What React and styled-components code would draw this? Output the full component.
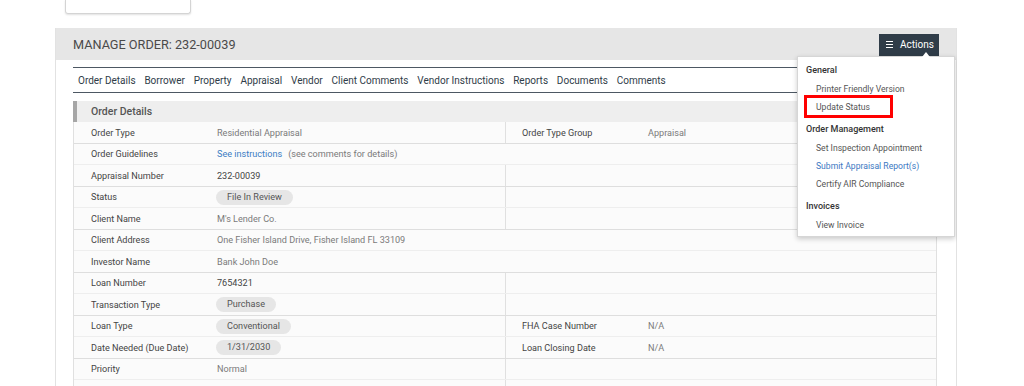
import React from "react";
import styled, { createGlobalStyle } from "styled-components";

const GlobalStyle = createGlobalStyle`
  body {
    margin: 0;
    background: #fff;
    font-family: Roboto, "Liberation Sans", Arial, sans-serif;
  }
`;

const tabs = [
  "Order Details",
  "Borrower",
  "Property",
  "Appraisal",
  "Vendor",
  "Client Comments",
  "Vendor Instructions",
  "Reports",
  "Documents",
  "Comments",
];

const rows = [
  { label: "Order Type", value: "Residential Appraisal", right: { label: "Order Type Group", value: "Appraisal" } },
  { label: "Order Guidelines", link: "See instructions", note: "(see comments for details)", full: true },
  { label: "Appraisal Number", value: "232-00039", strong: true, right: {} },
  { label: "Status", pill: "File In Review", right: {} },
  { label: "Client Name", value: "M's Lender Co.", right: {} },
  { label: "Client Address", value: "One Fisher Island Drive, Fisher Island FL 33109", full: true },
  { label: "Investor Name", value: "Bank John Doe", full: true },
  { label: "Loan Number", value: "7654321", strong: true, right: {} },
  { label: "Transaction Type", pill: "Purchase", right: {} },
  { label: "Loan Type", pill: "Conventional", right: { label: "FHA Case Number", value: "N/A" } },
  { label: "Date Needed (Due Date)", pill: "1/31/2030", right: { label: "Loan Closing Date", value: "N/A" } },
  { label: "Priority", value: "Normal", right: {} },
  { label: "", value: "", right: {} },
];

const menu = [
  { title: "General", items: [{ text: "Printer Friendly Version" }, { text: "Update Status", marked: true }] },
  {
    title: "Order Management",
    items: [
      { text: "Set Inspection Appointment" },
      { text: "Submit Appraisal Report(s)", link: true },
      { text: "Certify AIR Compliance" },
    ],
  },
  { title: "Invoices", items: [{ text: "View Invoice" }] },
];

const Page = styled.div`
  width: 902px;
  padding-left: 55px;
  height: 386px;
  overflow: hidden;
`;

const TopCard = styled.div`
  margin-left: 10px;
  width: 124px;
  height: 13px;
  border: 1px solid #d4d4d4;
  border-top: none;
  border-radius: 0 0 3px 3px;
  box-shadow: 0 1px 2px rgba(0, 0, 0, 0.12);
  margin-bottom: 14px;
`;

const Panel = styled.section`
  border-left: 1px solid #e2e2e2;
  border-right: 1px solid #e2e2e2;
`;

const PanelHeader = styled.header`
  height: 32px;
  background: #e6e6e6;
  display: flex;
  align-items: center;
  justify-content: space-between;
  padding: 0 17px 0 17px;
`;

const Title = styled.h1`
  margin: 0;
  font-size: 12.7px;
  font-weight: 400;
  color: #4a4a4a;
`;

const ActionsWrap = styled.div`
  position: relative;
  margin-top: 1px;
`;

const ActionsButton = styled.button`
  height: 22px;
  width: 60px;
  padding: 0 0 0 7px;
  background: #2f3c48;
  border: none;
  color: #fff;
  font-family: inherit;
  font-size: 10px;
  display: flex;
  align-items: center;
  gap: 7px;
  cursor: pointer;
`;

const Burger = styled.span`
  display: flex;
  flex-direction: column;
  gap: 1.6px;
  width: 7px;
  span {
    height: 1.4px;
    background: #fff;
  }
`;

const Menu = styled.div`
  position: absolute;
  top: 22px;
  right: -16px;
  width: 156px;
  background: #fff;
  border: 1px solid #d6d6d6;
  box-shadow: 0 2px 5px rgba(0, 0, 0, 0.2);
  padding: 4px 0 2px;
  z-index: 5;
  &::before {
    content: "";
    position: absolute;
    top: -5px;
    right: 24px;
    border-left: 4px solid transparent;
    border-right: 4px solid transparent;
    border-bottom: 5px solid #fff;
  }
`;

const MenuTitle = styled.div`
  font-size: 9px;
  font-weight: 500;
  color: #333;
  padding: 0 8px;
  line-height: 18px;
  margin-bottom: 1px;
`;

const MenuItem = styled.div`
  position: relative;
  font-size: 8.6px;
  color: ${(p) => (p.$link ? "#3b78c2" : "#555")};
  padding: 0 18px;
  line-height: 18px;
  & + ${MenuTitle} {
    margin-top: 4px;
  }
`;

const Marker = styled.span`
  position: absolute;
  left: 6px;
  top: -3px;
  width: 89px;
  height: 23px;
  box-sizing: border-box;
  border: 3px solid #f00;
`;

const Body = styled.div`
  padding: 7px 19px 0 17px;
`;

const Tabs = styled.nav`
  height: 24px;
  border-top: 1px solid #4d5863;
  border-bottom: 1px solid #4d5863;
  display: flex;
  align-items: center;
  gap: 8.8px;
  padding-left: 5px;
  margin-bottom: 8px;
`;

const Tab = styled.span`
  font-size: 10px;
  color: #2f3c48;
  white-space: nowrap;
`;

const SectionHead = styled.div`
  height: 21px;
  background: #eeeeee;
  border-left: 4px solid #a6a6a6;
  display: flex;
  align-items: center;
  padding-left: 14px;
  font-size: 10.5px;
  font-weight: 500;
  color: #555;
`;

const Table = styled.div`
  border-left: 1px solid #e0e0e0;
  border-right: 1px solid #e0e0e0;
`;

const Row = styled.div`
  height: 21.5px;
  box-sizing: border-box;
  display: grid;
  grid-template-columns: ${(p) => (p.$full ? "1fr" : "1fr 1fr")};
  background: #fbfbfb;
  border-bottom: 1px solid ${(p) => (p.$odd ? "#eeeeee" : "#dedede")};
`;

const Cell = styled.div`
  display: grid;
  grid-template-columns: 126px 1fr;
  align-items: center;
  padding-top: 1px;
  padding-left: ${(p) => (p.$right ? "16px" : "17px")};
  border-left: ${(p) => (p.$right ? "1px solid #e0e0e0" : "none")};
  font-size: 9.1px;
  white-space: nowrap;
`;

const Label = styled.span`
  color: #444;
`;

const Value = styled.span`
  color: ${(p) => (p.$strong ? "#444" : "#7a7a7a")};
`;

const Link = styled.span`
  color: #3b7dc4;
  margin-right: 6px;
`;

const Pill = styled.span`
  justify-self: start;
  margin-left: -1px;
  height: 15px;
  line-height: 15px;
  padding: 0 11px;
  border-radius: 8px;
  background: #e6e6e6;
  color: #555;
`;

function Info({ row }) {
  return (
    <Cell>
      <Label>{row.label}</Label>
      {row.pill ? (
        <Pill>{row.pill}</Pill>
      ) : row.link ? (
        <Value>
          <Link>{row.link}</Link>
          {row.note}
        </Value>
      ) : (
        <Value $strong={row.strong}>{row.value}</Value>
      )}
    </Cell>
  );
}

export default function App() {
  return (
    <>
      <GlobalStyle />
      <Page>
        <TopCard />
        <Panel>
          <PanelHeader>
            <Title>MANAGE ORDER: 232-00039</Title>
            <ActionsWrap>
              <ActionsButton>
                <Burger>
                  <span />
                  <span />
                  <span />
                </Burger>
                Actions
              </ActionsButton>
              <Menu>
                {menu.map((group) => (
                  <React.Fragment key={group.title}>
                    <MenuTitle>{group.title}</MenuTitle>
                    {group.items.map((item) => (
                      <MenuItem key={item.text} $link={item.link}>
                        {item.marked && <Marker />}
                        {item.text}
                      </MenuItem>
                    ))}
                  </React.Fragment>
                ))}
              </Menu>
            </ActionsWrap>
          </PanelHeader>
          <Body>
            <Tabs>
              {tabs.map((t) => (
                <Tab key={t}>{t}</Tab>
              ))}
            </Tabs>
            <SectionHead>Order Details</SectionHead>
            <Table>
              {rows.map((row, i) => (
                <Row key={i} $full={row.full} $odd={i % 2 === 1}>
                  <Info row={row} />
                  {!row.full && (
                    <Cell $right>
                      <Label>{row.right.label}</Label>
                      <Value>{row.right.value}</Value>
                    </Cell>
                  )}
                </Row>
              ))}
            </Table>
          </Body>
        </Panel>
      </Page>
    </>
  );
}
